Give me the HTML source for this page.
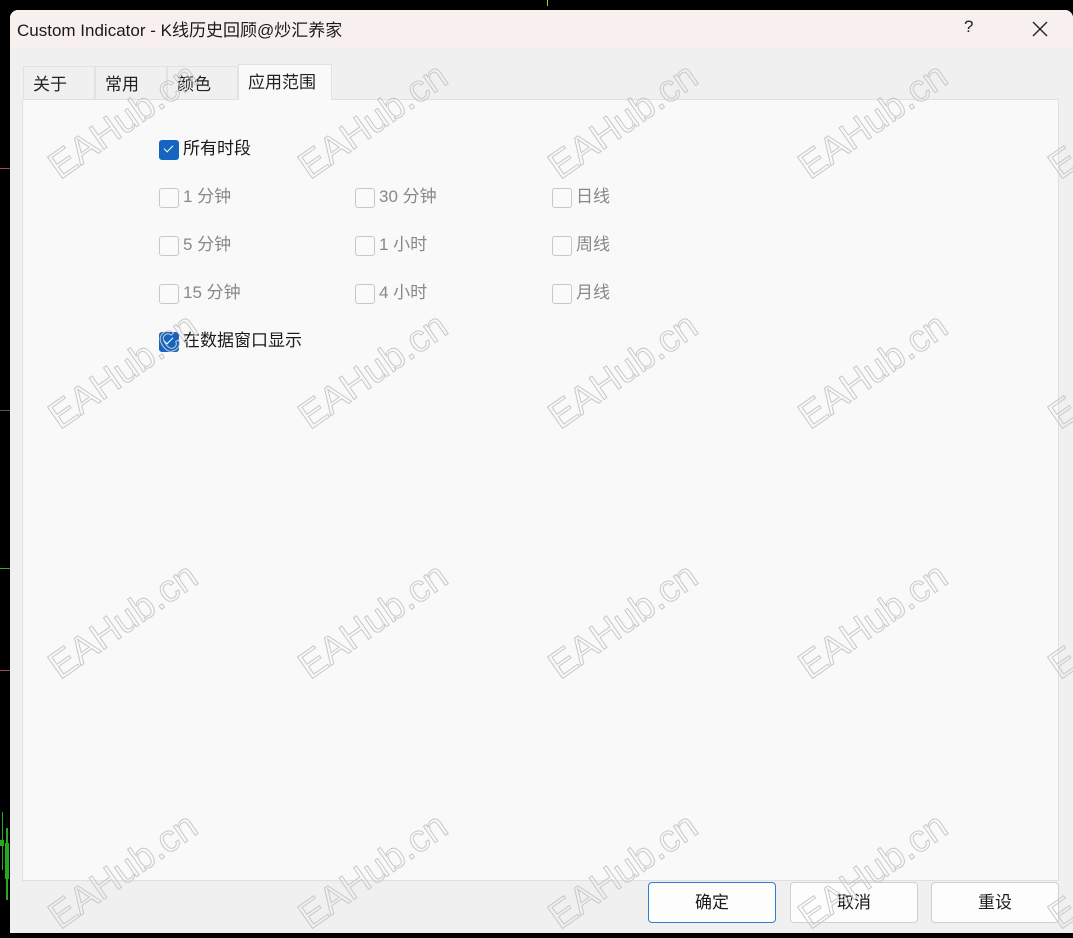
<!DOCTYPE html>
<html><head><meta charset="utf-8"><style>
*{margin:0;padding:0;box-sizing:border-box}
body{width:1073px;height:933px;background:#000;position:relative;overflow:hidden;font-family:"Liberation Sans","Noto Sans CJK SC",sans-serif}
.win{position:absolute;left:10px;top:10px;width:1063px;height:923px;background:#f0f0f0;border-radius:8px 8px 0 0;overflow:hidden}
.title{height:38px;background:#f8f0ee;position:relative}
.title .t{position:absolute;left:7px;top:6px;font-size:17px;color:#1a1a1a}
.title .q{position:absolute;left:954px;top:7px;font-size:17px;color:#222}
.title .x{position:absolute;left:1020px;top:9px;width:20px;height:20px}
.panel{position:absolute;left:12px;top:89px;width:1037px;height:782px;background:#f9f9f9;border:1px solid #e0e0e0}
.tab{position:absolute;top:56px;height:34px;border:1px solid #e2e2e2;border-bottom:none;background:#f0f0f0;font-size:17px;color:#222;padding:3px 0 0 9px}
.tab.a{top:54px;height:36px;background:#f9f9f9;z-index:2}
.cb{position:absolute;font-size:17px;color:#888;height:22px;line-height:20px;padding-left:24px}
.cb:before{content:"";position:absolute;left:0;top:1px;width:18px;height:18px;border:1px solid #c8c8c8;border-radius:3px;background:#fafafa}
.cb.on{color:#1a1a1a}
.cb.on:before{background:#1565c0;border-color:#1565c0}
.cb.on:after{content:"";position:absolute;left:5px;top:6px;width:8px;height:4px;border-left:1.6px solid #fff;border-bottom:1.6px solid #fff;transform:rotate(-45deg)}
.btn{position:absolute;top:872px;width:128px;height:41px;background:#fdfdfd;border:1px solid #d0d0d0;border-radius:4px;font-size:17px;text-align:center;line-height:39px;color:#1a1a1a}
.btn.p{border:1.5px solid #2a7fd4}
.wm{position:absolute;font-size:38px;font-family:"Liberation Sans",sans-serif;color:transparent;-webkit-text-stroke:1px #c9c9c9;transform-origin:0 100%;transform:rotate(-35deg);white-space:nowrap;line-height:38px;z-index:5}
</style></head><body>
<div style="position:absolute;left:547px;top:0;width:1px;height:6px;background:#cc0"></div>
<div style="position:absolute;left:0;top:168px;width:10px;height:1px;background:#a04070"></div>
<div style="position:absolute;left:0;top:410px;width:10px;height:1px;background:#555"></div>
<div style="position:absolute;left:0;top:568px;width:10px;height:1px;background:#3a3"></div>
<div style="position:absolute;left:0;top:670px;width:10px;height:1px;background:#a04070"></div>
<div style="position:absolute;left:2px;top:812px;width:1px;height:58px;background:#2a2"></div>
<div style="position:absolute;left:0;top:840px;width:4px;height:6px;background:#2a2"></div>
<div style="position:absolute;left:6px;top:828px;width:2px;height:72px;background:#2a2"></div>
<div style="position:absolute;left:5px;top:843px;width:4px;height:36px;background:#2a2"></div>
<div class="win">
 <div class="title"><span class="t">Custom Indicator - K线历史回顾@炒汇养家</span><span class="q">?</span>
 <svg class="x" viewBox="0 0 20 20"><path d="M3 3L17 17M17 3L3 17" stroke="#222" stroke-width="1.4"/></svg></div>
 <div class="tab" style="left:13px;width:72px">关于</div>
 <div class="tab" style="left:85px;width:72px">常用</div>
 <div class="tab" style="left:157px;width:71px">颜色</div>
 <div class="tab a" style="left:228px;width:94px">应用范围</div>
 <div class="panel"></div>
 <div class="cb on" style="left:149px;top:129px">所有时段</div>
 <div class="cb" style="left:149px;top:177px">1 分钟</div>
 <div class="cb" style="left:345px;top:177px">30 分钟</div>
 <div class="cb" style="left:542px;top:177px">日线</div>
 <div class="cb" style="left:149px;top:225px">5 分钟</div>
 <div class="cb" style="left:345px;top:225px">1 小时</div>
 <div class="cb" style="left:542px;top:225px">周线</div>
 <div class="cb" style="left:149px;top:273px">15 分钟</div>
 <div class="cb" style="left:345px;top:273px">4 小时</div>
 <div class="cb" style="left:542px;top:273px">月线</div>
 <div class="cb on" style="left:149px;top:321px">在数据窗口显示</div>
 <div class="btn p" style="left:638px">确定</div>
 <div class="btn" style="left:780px">取消</div>
 <div class="btn" style="left:921px">重设</div>
</div>
<div class="wm" style="left:64px;top:148px">EAHub.cn</div><div class="wm" style="left:314px;top:148px">EAHub.cn</div><div class="wm" style="left:564px;top:148px">EAHub.cn</div><div class="wm" style="left:814px;top:148px">EAHub.cn</div><div class="wm" style="left:1064px;top:148px">EAHub.cn</div>
<div class="wm" style="left:64px;top:398px">EAHub.cn</div><div class="wm" style="left:314px;top:398px">EAHub.cn</div><div class="wm" style="left:564px;top:398px">EAHub.cn</div><div class="wm" style="left:814px;top:398px">EAHub.cn</div><div class="wm" style="left:1064px;top:398px">EAHub.cn</div>
<div class="wm" style="left:64px;top:648px">EAHub.cn</div><div class="wm" style="left:314px;top:648px">EAHub.cn</div><div class="wm" style="left:564px;top:648px">EAHub.cn</div><div class="wm" style="left:814px;top:648px">EAHub.cn</div><div class="wm" style="left:1064px;top:648px">EAHub.cn</div>
<div class="wm" style="left:64px;top:898px">EAHub.cn</div><div class="wm" style="left:314px;top:898px">EAHub.cn</div><div class="wm" style="left:564px;top:898px">EAHub.cn</div><div class="wm" style="left:814px;top:898px">EAHub.cn</div><div class="wm" style="left:1064px;top:898px">EAHub.cn</div>
</body></html>
